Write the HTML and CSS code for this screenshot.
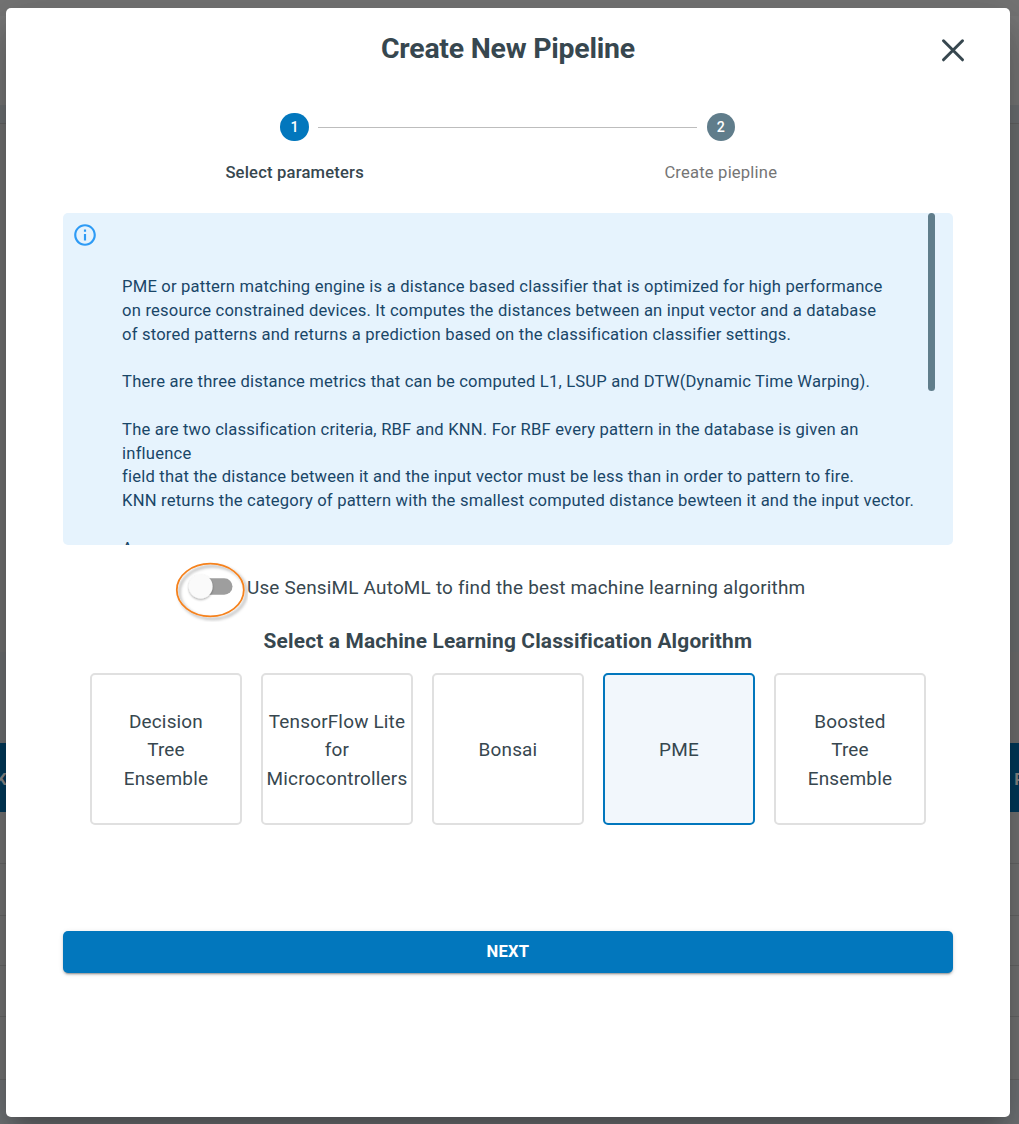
FILE: index.html
```html
<!DOCTYPE html>
<html lang="en">
<head>
<meta charset="utf-8">
<title>Create New Pipeline</title>
<link rel="stylesheet" href="styles.css">
</head>
<body>
<div class="page" aria-hidden="true">
  <div class="page-top"></div>
  <div class="page-head"></div>
  <div class="page-strip"></div>
  <div class="page-body"></div>
  <div class="page-tools"></div>
  <div class="page-bar"><span class="bar-left">K</span><span class="bar-right">P</span></div>
  <div class="page-row row-first"></div>
  <div class="page-row row-second"></div>
  <div class="page-row row-third"></div>
  <div class="page-row row-fourth"></div>
  <div class="page-row row-last"></div>
  <div class="page-foot"></div>
</div>
<main class="dialog" role="dialog" aria-labelledby="title">
  <header class="dialog-header">
    <h1 class="title" id="title">Create New Pipeline</h1>
    <button class="close" aria-label="Close">
      <svg width="24" height="24" viewBox="0 0 24 24"><path d="M2.500 2.800 21.500 21.800M21.500 2.800 2.500 21.800" fill="none" stroke="#37474f" stroke-width="3" stroke-linecap="round"/></svg>
    </button>
  </header>
  <section class="stepper">
    <div class="step">
      <div class="step-rail"><i class="line hidden"></i><span class="step-dot active">1</span><i class="line"></i></div>
      <span class="step-label current">Select parameters</span>
    </div>
    <div class="step">
      <div class="step-rail"><i class="line"></i><span class="step-dot">2</span><i class="line hidden"></i></div>
      <span class="step-label">Create piepline</span>
    </div>
  </section>
  <section class="alert">
    <svg class="info" width="26" height="26" viewBox="0 0 24 24"><path fill="#2e9bf5" d="M11 7h2v2h-2zm0 4h2v6h-2zm1-9C6.480 2 2 6.480 2 12s4.480 10 10 10 10-4.480 10-10S17.520 2 12 2zm0 18c-4.410 0-8-3.590-8-8s3.590-8 8-8 8 3.590 8 8-3.590 8-8 8z"/></svg>
    <div class="alert-text">PME or pattern matching engine is a distance based classifier that is optimized for high performance
on resource constrained devices. It computes the distances between an input vector and a database
of stored patterns and returns a prediction based on the classification classifier settings.

There are three distance metrics that can be computed L1, LSUP and DTW(Dynamic Time Warping).

The are two classification criteria, RBF and KNN. For RBF every pattern in the database is given an
influence
field that the distance between it and the input vector must be less than in order to pattern to fire.
KNN returns the category of pattern with the smallest computed distance bewteen it and the input vector.

Args:</div>
    <div class="scroll-thumb"></div>
  </section>
  <section class="automl">
    <svg class="switch" width="76" height="64" viewBox="0 0 76 64">
      <defs>
        <filter id="ring-shadow" x="-20%" y="-20%" width="150%" height="150%"><feDropShadow dx="2.500" dy="2.500" stdDeviation="1.500" flood-color="#000" flood-opacity=".38"/></filter>
        <filter id="thumb-shadow" x="-20%" y="-20%" width="140%" height="150%"><feDropShadow dx="0" dy="1.200" stdDeviation="1" flood-color="#000" flood-opacity=".35"/></filter>
      </defs>
      <ellipse cx="38.300" cy="32" rx="33.500" ry="26.300" fill="none" stroke="#f5821f" stroke-width="1.800" filter="url(#ring-shadow)"/>
      <rect x="20" y="20.200" width="40.500" height="16.600" rx="8.300" fill="#9e9e9e"/>
      <circle cx="28.700" cy="28.500" r="11.900" fill="#fafafa" filter="url(#thumb-shadow)"/>
    </svg>
    <span class="automl-text">Use SensiML AutoML to find the best machine learning algorithm</span>
  </section>
  <h2 class="subtitle">Select a Machine Learning Classification Algorithm</h2>
  <section class="cards">
    <div class="card">Decision<br>Tree<br>Ensemble</div>
    <div class="card">TensorFlow Lite<br>for<br>Microcontrollers</div>
    <div class="card">Bonsai</div>
    <div class="card selected">PME</div>
    <div class="card">Boosted<br>Tree<br>Ensemble</div>
  </section>
  <button class="next">NEXT</button>
</main>
</body>
</html>
```
FILE: styles.css
```css
* { box-sizing: border-box; }
body {
  margin: 0;
  height: 1124px;
  overflow: hidden;
  position: relative;
  font-family: Roboto, sans-serif;
  color: #37474f;
  background: #6e6e6e;
}
.page { display: flex; flex-direction: column; height: 1124px; }
.page-top { height: 16px; background: #757575; }
.page-head { height: 89px; background: #787878; }
.page-strip { height: 19px; background: #6e7174; border-bottom: 1px solid #656565; }
.page-body { height: 528px; background: linear-gradient(90deg, #737373 50%, #6e7072 50%); }
.page-tools { height: 91px; background: linear-gradient(90deg, #6e7073 50%, #707070 50%); }
.page-bar {
  height: 69px;
  display: flex;
  justify-content: space-between;
  align-items: center;
  background: #003a5b;
  color: #8a8a8a;
  font-size: 16.600px;
  font-weight: 700;
}
.bar-left { margin-left: -4px; }
.bar-right { margin-right: -6px; }
.bar-left, .bar-right { padding-top: 3px; }
.page-row { background: #757575; border-bottom: 1px solid #686868; }
.row-first { height: 52px; }
.row-second { height: 52px; }
.row-third { height: 50px; }
.row-fourth { height: 51px; }
.row-last { height: 63px; }
.page-foot { flex: 1; background: #717477; }

.dialog {
  position: absolute;
  left: 5.600px;
  top: 7.500px;
  width: 1004.600px;
  height: 1109.500px;
  padding: 0 57px;
  border-radius: 5px;
  background: #fff;
  box-shadow: 0 13px 18px -8px rgba(0,0,0,.2), 0 28px 45px 4px rgba(0,0,0,.14), 0 11px 54px 9px rgba(0,0,0,.12);
  display: flex;
  flex-direction: column;
}
.dialog-header {
  height: 81px;
  flex: none;
  display: grid;
  grid-template-columns: 24px 1fr 24px;
  align-items: center;
  margin-right: -12px;
  margin-left: -12px;
}
.title {
  grid-column: 2;
  margin: 0;
  padding-top: 1px;
  text-align: center;
  font-size: 28.440px;
  font-weight: 700;
  line-height: 40px;
  letter-spacing: -.237px;
}
.close { border: 0; padding: 4px 0 0; background: none; line-height: 0; }
.stepper {
  display: flex;
  flex: none;
  height: 124px;
  margin: 0 19.400px 0 19px;
  padding-top: 24px;
}
.step { flex: 1; display: flex; flex-direction: column; align-items: center; }
.step-rail { display: flex; align-items: center; gap: 9.500px; width: 100%; height: 29px; }
.line { flex: 1; height: 1px; background: #bdbdbd; }
.line.hidden { visibility: hidden; }
.step-dot {
  width: 28.500px;
  height: 28.500px;
  border-radius: 50%;
  background: #607d8b;
  color: #fff;
  display: flex;
  align-items: center;
  justify-content: center;
  font-size: 14.200px;
  font-weight: 500;
}
.step-dot.active { background: #0277bd; }
.step-label {
  margin-top: 19px;
  font-size: 16.600px;
  line-height: 24px;
  letter-spacing: .187px;
  color: #757575;
}
.step-label.current { font-weight: 500; color: #37474f; }
.alert {
  flex: none;
  height: 332.500px;
  overflow: hidden;
  display: flex;
  border-radius: 5px;
  background: #e6f3fd;
  color: #194668;
}
.info { flex: none; margin: 9px 0 0 9.500px; }
.alert-text {
  width: 806px;
  margin-left: 24px;
  padding-top: 62.700px;
  flex: none;
  white-space: pre;
  font-size: 16.600px;
  line-height: 23.760px;
  letter-spacing: .187px;
}
.scroll-thumb { flex: none; width: 7px; height: 178.500px; margin-left: -.300px; border-radius: 4px; background: #607d8b; }
.automl { flex: none; height: 68px; display: flex; padding: 12.500px 0 0 109px; }
.switch { flex: none; }
.automl-text {
  font-size: 18.960px;
  line-height: 28.400px;
  letter-spacing: .195px;
  margin: 16px 0 0 -.700px;
  white-space: nowrap;
}
.subtitle {
  flex: none;
  margin: 11.500px 0 0;
  font-size: 20.860px;
  font-weight: 700;
  line-height: 32px;
  letter-spacing: .170px;
  text-align: center;
}
.cards { flex: none; display: flex; gap: 19px; margin: 16.500px 0 0 27.400px; }
.card {
  width: 152px;
  height: 152px;
  padding-top: 3px;
  border: 2px solid #e0e0e0;
  border-radius: 5px;
  display: flex;
  align-items: center;
  justify-content: center;
  text-align: center;
  font-size: 18.960px;
  line-height: 28.440px;
  letter-spacing: .178px;
}
.card.selected { border-color: #0277bd; background: #f2f7fc; }
.next {
  flex: none;
  height: 42.500px;
  margin-top: 105.500px;
  border: 0;
  border-radius: 5px;
  background: #0277bd;
  color: #fff;
  font: 700 16.600px Roboto, sans-serif;
  letter-spacing: .2px;
  box-shadow: 0 3px 1px -2px rgba(0,0,0,.2), 0 2px 2px rgba(0,0,0,.14), 0 1px 5px rgba(0,0,0,.12);
}
```
